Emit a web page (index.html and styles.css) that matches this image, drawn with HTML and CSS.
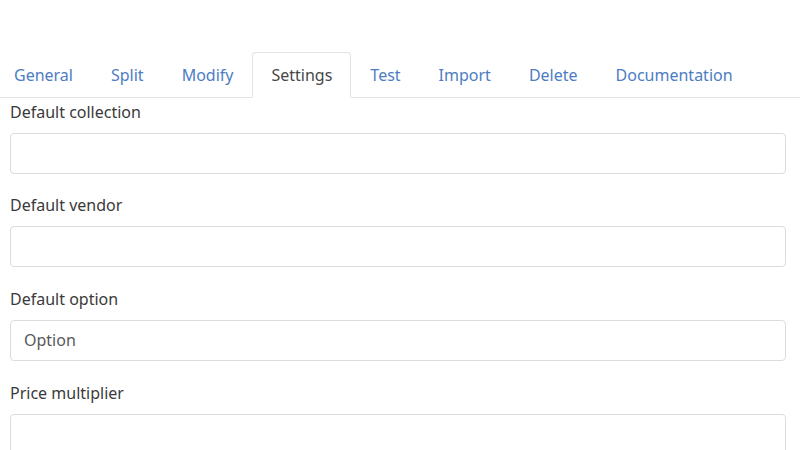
FILE: index.html
```html
<!DOCTYPE html>
<html>
<head>
<meta charset="utf-8">
<link rel="stylesheet" href="styles.css">
</head>
<body>
<nav class="tabs">
  <a class="tab" href="#">General</a>
  <a class="tab" href="#">Split</a>
  <a class="tab" href="#">Modify</a>
  <a class="tab active" href="#">Settings</a>
  <a class="tab" href="#">Test</a>
  <a class="tab" href="#">Import</a>
  <a class="tab" href="#">Delete</a>
  <a class="tab" href="#">Documentation</a>
</nav>
<form class="form">
  <div class="group">
    <label class="label">Default collection</label>
    <input class="control" type="text">
  </div>
  <div class="group">
    <label class="label">Default vendor</label>
    <input class="control" type="text">
  </div>
  <div class="group">
    <label class="label">Default option</label>
    <input class="control" type="text" value="Option">
  </div>
  <div class="group">
    <label class="label">Price multiplier</label>
    <input class="control" type="text">
  </div>
</form>
</body>
</html>
```
FILE: styles.css
```css
html, body {
  margin: 0;
  padding: 0;
  background: #ffffff;
  overflow: hidden;
}
body {
  font-family: "Noto Sans", "Open Sans", sans-serif;
  font-size: 16px;
  color: #3a3a3a;
  width: 800px;
  height: 450px;
}
.tabs {
  display: flex;
  margin-top: 52px;
  margin-left: -5px;
  border-bottom: 1px solid #e3e3e3;
}
.tab {
  display: block;
  padding: 10px 18px;
  line-height: 24px;
  color: #4d7dc2;
  text-decoration: none;
  border: 1px solid transparent;
  border-radius: 4px 4px 0 0;
  margin-bottom: -1px;
}
.tab.active {
  color: #474747;
  border-color: #e3e3e3 #e3e3e3 #ffffff;
  background: #ffffff;
}
.form {
  padding: 1.5px 14px 0 10px;
}
.group {
  margin-bottom: 19.7px;
}
.label {
  display: block;
  line-height: 24px;
  margin-bottom: 9px;
  color: #3a3a3a;
}
.control {
  display: block;
  box-sizing: border-box;
  width: 100%;
  height: 41px;
  padding: 0 13px;
  font: inherit;
  color: #595959;
  border: 1px solid #dcdcdc;
  border-radius: 4px;
  background: #ffffff;
  outline: none;
}
```
